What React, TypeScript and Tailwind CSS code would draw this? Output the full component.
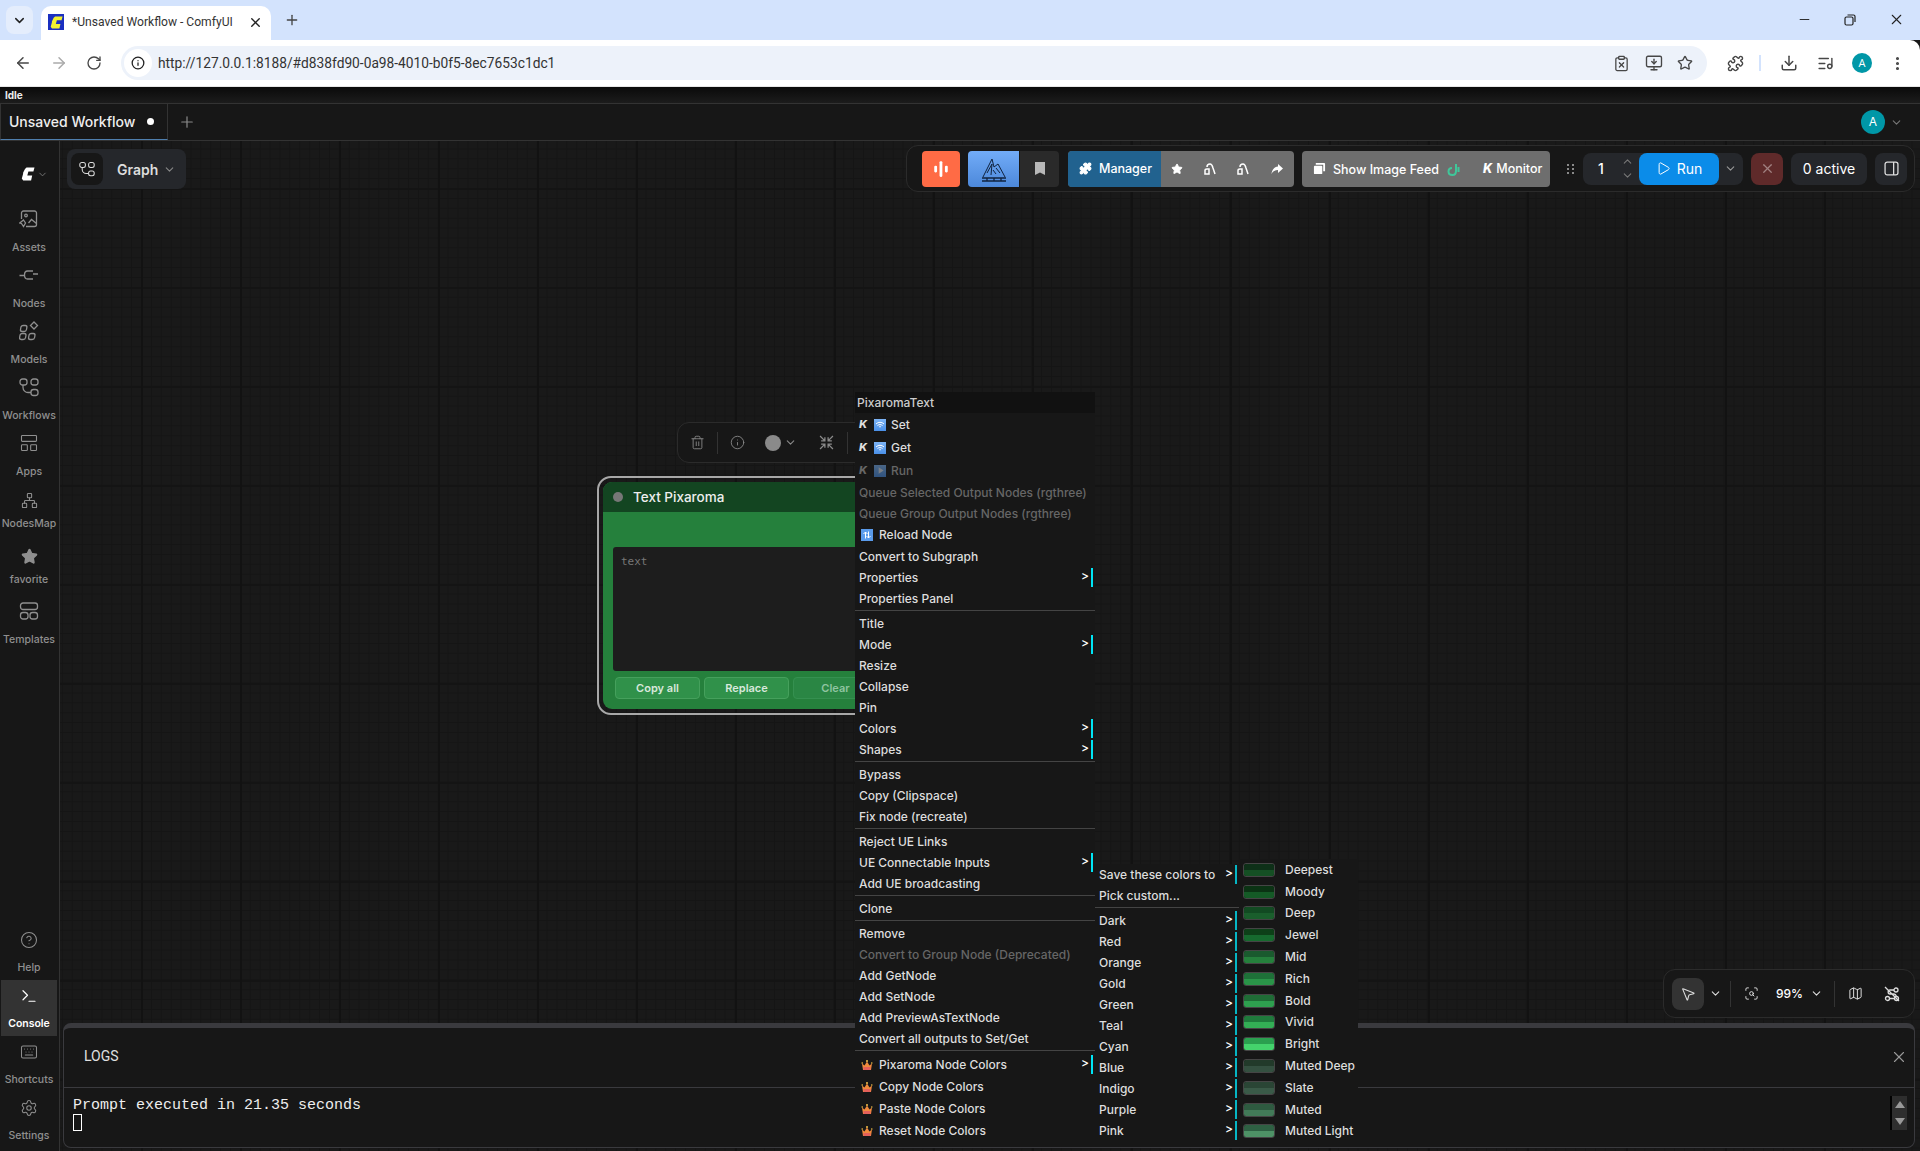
import type { ReactNode } from "react";
import {
  ArrowLeft,
  ArrowRight,
  ChevronDown,
  ChevronUp,
  CircleHelp,
  ClipboardX,
  Download,
  EllipsisVertical,
  Info,
  Keyboard,
  LayoutPanelTop,
  ListMusic,
  Map as MapIcon,
  Minus,
  MonitorDown,
  MousePointer2,
  Network,
  Play,
  Plus,
  Puzzle,
  RotateCw,
  ScanSearch,
  Settings,
  Star,
  Terminal,
  Trash2,
  X,
} from "lucide-react";

function ComfyLogo({ className, fill = "#fff" }: { className?: string; fill?: string }) {
  return (
    <svg viewBox="0 0 16 16" className={className}>
      <path d="M6.5 1.5H14.5L13.4 5.5H8.4L7.3 9.5H12.2L11.1 14.5H3.2L1.8 12.6L3 8.2L3.2 6.6L5 3Z" fill={fill} />
    </svg>
  );
}

function AssetsIcon() {
  return (
    <svg viewBox="0 0 20 20" className="h-[20px] w-[20px]" fill="none" stroke="currentColor" strokeWidth="1.3">
      <path d="M7 17.5H15.5C16.6 17.5 17.5 16.6 17.5 15.5V4C17.5 2.9 16.6 2 15.5 2H4.500C3.400 2 2.500 2.900 2.500 4V10" />
      <path d="M9.500 14L12.500 10.500L17.500 14.500" />
      <circle cx="7" cy="6.500" r="1.300" />
      <path d="M4.500 11L6.500 14L4.500 17.500L2.500 14.500L0.800 14Z" />
    </svg>
  );
}

function NodesIcon() {
  return (
    <svg viewBox="0 0 20 20" className="h-[20px] w-[20px]" fill="none" stroke="currentColor" strokeWidth="1.3">
      <path d="M0.500 10.500H5M14 9H19" />
      <path d="M14 6H8.500C6.500 6 5.500 8 5.500 10C5.500 12 6.500 14 8.500 14H14" />
    </svg>
  );
}

function ModelsIcon() {
  return (
    <svg viewBox="0 0 20 20" className="h-[20px] w-[20px]" fill="none" stroke="currentColor" strokeWidth="1.3">
      <rect x="3" y="4.500" width="6" height="6" rx="2" transform="skewX(-10)" />
      <rect x="3.500" y="12.500" width="6" height="6" rx="2" transform="skewX(-10)" />
      <rect x="12.500" y="12.500" width="6" height="6" rx="2" transform="skewX(-10)" />
      <path d="M15 1L18.500 4.500L15 8L11.500 4.500Z" />
    </svg>
  );
}

function WorkflowIcon({ className }: { className?: string }) {
  return (
    <svg viewBox="0 0 20 20" className={className} fill="none" stroke="currentColor" strokeWidth="1.3">
      <rect x="1" y="2" width="7" height="6" rx="2.500" />
      <rect x="12" y="2" width="7" height="6" rx="2.500" />
      <rect x="12" y="12.500" width="7" height="6" rx="2.500" />
      <path d="M4 8V10.500C4 13.500 6.500 15.500 9 15.500H12" />
    </svg>
  );
}

function TemplatesIcon() {
  return (
    <svg viewBox="0 0 20 20" className="h-[20px] w-[20px]" fill="none" stroke="currentColor" strokeWidth="1.3">
      <rect x="1.500" y="2" width="17" height="6.500" rx="2.500" />
      <rect x="1.500" y="11.500" width="7.500" height="6.500" rx="2.500" />
      <rect x="11" y="11.500" width="7.500" height="6.500" rx="2.500" />
    </svg>
  );
}

function SideItem({ icon, label, tight, active }: { icon: ReactNode; label: string; tight?: boolean; active?: boolean }) {
  return (
    <div
      className={
        "mx-[1px] flex h-[56px] w-[56px] flex-col items-center justify-center " +
        (tight ? "gap-[8px] " : "gap-[12px] ") +
        (active ? "bg-[#333333] text-white" : "text-[#8f8f8f]")
      }
    >
      {icon}
      <span className={"whitespace-nowrap text-[10.500px] leading-[13px] " + (active ? "font-semibold" : "font-medium")}>{label}</span>
    </div>
  );
}

function Sidebar() {
  return (
    <aside className="flex h-full w-[60px] shrink-0 flex-col border-r border-[#333333] bg-[#171717]">
      <div className="flex h-[62px] items-center pl-[20px] pt-[4px]">
        <ComfyLogo className="h-[16px] w-[16px]" />
        <ChevronDown className="ml-[1px] h-[11px] w-[11px] text-[#777777]" />
      </div>
      <SideItem icon={<AssetsIcon />} label="Assets" />
      <SideItem icon={<NodesIcon />} label="Nodes" />
      <SideItem icon={<ModelsIcon />} label="Models" />
      <SideItem icon={<WorkflowIcon className="h-[20px] w-[20px]" />} label="Workflows" />
      <SideItem icon={<LayoutPanelTop className="h-[20px] w-[20px]" strokeWidth={1.3} />} label="Apps" />
      <SideItem tight icon={<Network className="h-[17px] w-[17px]" strokeWidth={1.5} />} label="NodesMap" />
      <SideItem tight icon={<Star className="h-[17px] w-[17px]" fill="currentColor" />} label="favorite" />
      <SideItem icon={<TemplatesIcon />} label="Templates" />
      <div className="mt-auto pb-[3px]">
        <SideItem icon={<CircleHelp className="h-[18px] w-[18px]" strokeWidth={1.4} />} label="Help" />
        <SideItem active icon={<Terminal className="h-[18px] w-[18px]" strokeWidth={1.6} />} label="Console" />
        <SideItem icon={<Keyboard className="h-[18px] w-[18px]" strokeWidth={1.4} />} label="Shortcuts" />
        <SideItem icon={<Settings className="h-[18px] w-[18px]" strokeWidth={1.4} />} label="Settings" />
      </div>
    </aside>
  );
}

function ChromeBars() {
  return (
    <>
      <div className="flex h-[40px] items-start bg-[#d3e3fd] text-[#333333]">
        <div className="ml-[6px] mt-[6px] flex h-[28px] w-[27px] items-center justify-center rounded-[8px] bg-[#e4edfc]">
          <ChevronDown className="h-[15px] w-[15px] text-[#222222]" strokeWidth={2.4} />
        </div>
        <div className="ml-[8px] mt-[6px] flex h-[34px] w-[230px] items-center rounded-t-[10px] bg-white pb-[2px] pl-[7px]">
          <div className="flex h-[16px] w-[16px] items-center justify-center bg-[#1a2fc0]">
            <ComfyLogo className="h-[15px] w-[15px]" fill="#f2f230" />
          </div>
          <span className="ml-[8px] w-[176px] whitespace-nowrap text-[12.100px] text-[#333333] [font-family:Roboto,sans-serif]">*Unsaved Workflow - ComfyUI</span>
          <X className="h-[15px] w-[15px] text-[#222222]" strokeWidth={2.2} />
        </div>
        <Plus className="ml-[13px] mt-[12px] h-[16px] w-[16px] text-[#444444]" strokeWidth={2} />
        <Minus className="ml-auto mt-[12px] h-[15px] w-[15px] text-[#222222]" strokeWidth={1.5} />
        <svg viewBox="0 0 12 12" className="ml-[32px] mt-[14px] h-[12px] w-[12px]" fill="none" stroke="#222222" strokeWidth="1.200">
          <rect x="1" y="3" width="8" height="8" rx="1.500" />
          <path d="M3.500 1H9.500C10.500 1 11 1.500 11 2.500V8" />
        </svg>
        <X className="ml-[32px] mr-[15px] mt-[11px] h-[17px] w-[17px] text-[#222222]" strokeWidth={1.5} />
      </div>
      <div className="flex h-[46px] items-center rounded-tr-[10px] bg-white text-[#474747]">
        <ArrowLeft className="ml-[14px] h-[18px] w-[18px]" strokeWidth={2} />
        <ArrowRight className="ml-[18px] h-[18px] w-[18px] text-[#aaaaaa]" strokeWidth={2} />
        <RotateCw className="ml-[18px] h-[16px] w-[16px]" strokeWidth={2} />
        <div className="ml-[19px] flex h-[34px] w-[1586px] items-center rounded-full bg-[#edf2fa]">
          <div className="ml-[3px] flex h-[28px] w-[28px] items-center justify-center rounded-full bg-white">
            <Info className="h-[14px] w-[14px] text-[#222222]" strokeWidth={2.2} />
          </div>
          <span className="ml-[6px] pt-[1px] text-[13.760px] text-[#333333] [font-family:Roboto,sans-serif]">http://127.0.0.1:8188/#d838fd90-0a98-4010-b0f5-8ec7653c1dc1</span>
          <ClipboardX className="ml-auto h-[17px] w-[17px]" strokeWidth={1.8} />
          <MonitorDown className="ml-[15px] h-[18px] w-[18px]" strokeWidth={1.8} />
          <Star className="ml-[14px] mr-[14px] h-[16px] w-[16px]" strokeWidth={2} />
        </div>
        <Puzzle className="ml-[20px] h-[17px] w-[17px]" strokeWidth={2} />
        <div className="ml-[15px] h-[16px] w-[2px] bg-[#d3e3fd]" />
        <Download className="ml-[19px] h-[18px] w-[18px]" strokeWidth={2} />
        <ListMusic className="ml-[19px] h-[17px] w-[17px]" strokeWidth={2} />
        <div className="ml-[18px] flex h-[20px] w-[20px] items-center justify-center rounded-full bg-[#0097a7] text-[11px] text-white [font-family:'Open_Sans',sans-serif]">A</div>
        <EllipsisVertical className="ml-[17px] h-[17px] w-[17px]" strokeWidth={2.4} />
      </div>
      <div className="h-[1px] bg-[#e6e6e6]" />
    </>
  );
}

function TabBar() {
  return (
    <>
      <div className="flex h-[16px] items-center bg-[linear-gradient(#0a0a0a,#1c1c1c)] pl-[5px] text-[10px] font-bold text-[#eeeeee]">Idle</div>
      <div className="flex h-[38px] items-center border-y border-[#333333] bg-[#171717]">
        <div className="flex h-[36px] w-[168px] items-center border-x border-b border-[#333333] border-b-[#4f7fae] pl-[8px]">
          <span className="text-[14px] font-medium text-[#eeeeee]">Unsaved Workflow</span>
          <span className="ml-[12px] h-[7px] w-[7px] rounded-full bg-white" />
        </div>
        <Plus className="ml-[10px] h-[18px] w-[18px] text-[#8a8a8a]" strokeWidth={1.6} />
        <div className="ml-auto flex h-[24px] w-[24px] items-center justify-center rounded-full bg-[#0097a7] text-[12px] text-white">A</div>
        <ChevronDown className="ml-[5px] mr-[17px] h-[13px] w-[13px] text-[#777777]" />
      </div>
    </>
  );
}

function Toolbar() {
  return (
    <div className="absolute right-[5px] top-[4px] flex h-[47px] w-[1009px] items-center rounded-[12px] border border-[#2b2b2b] bg-[#171717] pl-[15px]">
      <div className="flex h-[36px] w-[38px] items-center justify-center rounded-[4px] bg-[#ff6b45]">
        <svg viewBox="0 0 16 16" className="h-[18px] w-[18px]" fill="#fff">
          <rect x="2" y="5" width="2.500" height="6" rx="1" />
          <rect x="6.700" y="1" width="2.500" height="14" rx="1" />
          <rect x="11.500" y="5" width="2.500" height="6" rx="1" />
        </svg>
      </div>
      <div className="ml-[8px] flex h-[36px] w-[51px] items-center justify-center rounded-l-[4px] bg-[linear-gradient(#72acf8,#4c88da)]">
        <svg viewBox="0 0 26 26" className="h-[26px] w-[26px]" fill="none" stroke="#10233f" strokeWidth="1">
          <path d="M2 21L11 3L13 11L17 8L24 21" />
          <path d="M6 17L11 8L10 19M12 14L15 18M15 12L19 17" />
          <path d="M1 22H25M1 25H25M6 22V25M13 22V25M20 22V25" strokeWidth="1.300" />
        </svg>
      </div>
      <div className="ml-[1px] flex h-[36px] w-[39px] items-center justify-center rounded-r-[4px] bg-[#2a2a2a]">
        <svg viewBox="0 0 12 14" className="h-[14px] w-[12px]" fill="#b8b8b8">
          <path d="M1 0H11V13L6 10.500L1 13Z" />
        </svg>
      </div>
      <div className="ml-[9px] flex h-[36px] w-[226px] overflow-hidden rounded-[4px] bg-[#6e6e6e] text-white">
        <div className="flex w-[93px] items-center bg-[#21628f] pl-[11px]">
          <Puzzle className="h-[13px] w-[13px]" fill="#fff" />
          <span className="ml-[7px] mt-[1px] text-[12.500px] font-medium">Manager</span>
        </div>
        <Star className="ml-[10px] mt-[12px] h-[12px] w-[12px]" fill="#fff" />
        <svg viewBox="0 0 12 12" className="ml-[21px] mt-[12px] h-[12px] w-[12px]" fill="none" stroke="#fff" strokeWidth="1.500">
          <path d="M1 11V7.500C1 6.500 2 6 3 6H5V11ZM3 4C3 2 4 1 6 1C8 1 8.500 3 9 5L11 11" />
        </svg>
        <svg viewBox="0 0 12 12" className="ml-[21px] mt-[12px] h-[12px] w-[12px]" fill="none" stroke="#fff" strokeWidth="1.500">
          <path d="M1 11V7.500C1 6.500 2 6 3 6H5V11ZM3 4C3 2 4 1 6 1C8 1 8.500 3 9 5L11 11" />
        </svg>
        <svg viewBox="0 0 12 12" className="ml-[22px] mt-[12px] h-[12px] w-[12px]" fill="#fff">
          <path d="M7 1L12 5.500L7 10V7C4 7 2 8 0.500 11C1 7 3 4 7 3.500Z" />
        </svg>
      </div>
      <div className="ml-[8px] flex h-[36px] w-[248px] items-center whitespace-nowrap rounded-[4px] bg-[#6e6e6e] pl-[11px] text-white">
        <svg viewBox="0 0 14 14" className="h-[13px] w-[13px]" fill="#fff">
          <path d="M3 1H12C12.600 1 13 1.400 13 2V10H11V3H3Z" />
          <rect x="1" y="4" width="9" height="9" rx="1" />
        </svg>
        <span className="ml-[7px] mt-[3px] text-[12.500px] font-medium">Show Image Feed</span>
        <svg viewBox="0 0 14 14" className="ml-[7px] mt-[2px] h-[14px] w-[14px]" fill="none" stroke="#3fc79a" strokeWidth="2">
          <path d="M10 1V8C10 10.500 8.500 12 6.500 12C4 12 2.500 10.500 2.500 8.500C2.500 6.500 4 5 6 5" />
          <path d="M12.500 4V9" />
        </svg>
        <span className="ml-[23px] mt-[1px] text-[12.500px] font-extrabold italic">K</span>
        <span className="ml-[4px] mt-[1px] text-[12.500px] font-medium">Monitor</span>
      </div>
      <div className="ml-[17px] grid grid-cols-2 gap-x-[3px] gap-y-[2px]">
        {[0, 1, 2, 3, 4, 5].map((i) => (
          <span key={i} className="h-[2px] w-[2px] bg-[#8a8a8a]" />
        ))}
      </div>
      <div className="ml-[9px] flex h-[32px] w-[160px] items-center rounded-[8px] bg-[#25272b]">
        <span className="ml-[15px] w-[23px] text-[14px] font-medium text-white">1</span>
        <div className="flex flex-col text-[#777777]">
          <ChevronUp className="h-[13px] w-[13px]" />
          <ChevronDown className="mt-[1px] h-[13px] w-[13px]" />
        </div>
        <div className="ml-[5px] flex h-[32px] w-[80px] items-center justify-center gap-[6px] rounded-[8px] bg-[#0b8ce9] text-white">
          <Play className="h-[15px] w-[15px]" strokeWidth={1.6} />
          <span className="text-[14px]">Run</span>
        </div>
        <ChevronDown className="ml-[5px] h-[13px] w-[13px] text-[#999999]" />
      </div>
      <div className="ml-[8px] flex h-[32px] w-[32px] items-center justify-center rounded-[8px] bg-[#5f2a2a]">
        <X className="h-[15px] w-[15px] text-[#a08080]" />
      </div>
      <div className="ml-[8px] flex h-[32px] w-[76px] items-center justify-center rounded-[8px] bg-[#25272b] text-[14px] text-white">0 active</div>
      <div className="ml-[8px] flex h-[32px] w-[32px] items-center justify-center rounded-[8px] bg-[#25272b]">
        <svg viewBox="0 0 14 14" className="h-[15px] w-[15px]" fill="none" stroke="#ddd" strokeWidth="1.200">
          <rect x="1" y="1" width="12" height="12" rx="2" />
          <path d="M9 1V13" />
        </svg>
      </div>
    </div>
  );
}

function NodeToolbox() {
  return (
    <div className="absolute left-[617px] top-[281px] flex h-[41px] w-[260px] items-center rounded-[12px] border border-[#2b2b2b] bg-[#171717] pl-[12px] text-[#8a8a8a]">
      <Trash2 className="h-[15px] w-[15px]" strokeWidth={1.4} />
      <div className="ml-[12px] h-[22px] w-[1px] bg-[#333333]" />
      <Info className="ml-[12px] h-[15px] w-[15px]" strokeWidth={1.4} />
      <span className="ml-[20px] h-[16px] w-[16px] rounded-full bg-[#8a8a8a]" />
      <ChevronDown className="ml-[3px] h-[13px] w-[13px]" />
      <svg viewBox="0 0 14 14" className="ml-[22px] h-[15px] w-[15px]" fill="none" stroke="currentColor" strokeWidth="1.200">
        <path d="M1 1L5.500 5.500M5.500 2V5.500H2M13 1L8.500 5.500M8.500 2V5.500H12M1 13L5.500 8.500M5.500 12V8.500H2M13 13L8.500 8.500M8.500 12V8.500H12" />
      </svg>
      <div className="ml-[13px] h-[22px] w-[1px] bg-[#333333]" />
    </div>
  );
}

function NodeCard() {
  return (
    <div className="absolute left-[537px] top-[335px] h-[239px] w-[330px] rounded-[14px] border-2 border-[#a8a8a8] p-[4px]">
      <div className="h-full overflow-hidden rounded-[9px] bg-[#25803c]">
        <div className="flex h-[30px] items-center bg-[#134521] pl-[10px]">
          <span className="h-[10px] w-[10px] rounded-full bg-[#777777]" />
          <span className="ml-[10px] text-[13.500px] font-medium text-[#eeeeee]">Text Pixaroma</span>
        </div>
        <div className="ml-[10px] mt-[35px] h-[124px] w-[300px] rounded-[3px] bg-[#1d1d1d] pl-[8px] pt-[7px] text-[11px] text-[#777777] [font-family:'DejaVu_Sans_Mono',monospace]">text</div>
        <div className="ml-[12px] mt-[6px] flex gap-[4px] text-[11px] font-semibold">
          <div className="flex h-[22px] w-[85px] items-center justify-center rounded-[4px] border border-[#45a05c] bg-[#30914a] text-[#d8e8dc]">Copy all</div>
          <div className="flex h-[22px] w-[85px] items-center justify-center rounded-[4px] border border-[#45a05c] bg-[#30914a] text-[#d8e8dc]">Replace</div>
          <div className="flex h-[22px] w-[85px] items-center justify-center rounded-[4px] border border-[#359050] bg-[#2a8644] text-[#8fc4a0]">Clear</div>
        </div>
      </div>
    </div>
  );
}

function WifiBadge({ dim }: { dim?: boolean }) {
  return (
    <span className={"flex h-[12px] w-[12px] items-center justify-center bg-[linear-gradient(#7db4f5,#4a90e8)] " + (dim ? "opacity-50" : "")}>
      {dim ? (
        <svg viewBox="0 0 10 10" className="h-[9px] w-[9px]" fill="#d8e4f5"><path d="M3 1.500L8.500 5L3 8.500Z" /></svg>
      ) : (
        <svg viewBox="0 0 10 10" className="h-[10px] w-[10px]" fill="none" stroke="#fff" strokeWidth="1">
          <path d="M1 4C3.500 1.800 6.500 1.800 9 4M2.500 5.500C4 4.300 6 4.300 7.500 5.500M4 7C4.600 6.500 5.400 6.500 6 7" />
        </svg>
      )}
    </span>
  );
}

function Crown() {
  return (
    <svg viewBox="0 0 12 12" className="h-[12px] w-[12px]">
      <path d="M1 4.500L3.500 6.500L6 2.500L8.500 6.500L11 4.500L10 11H2Z" fill="#f08a3c" />
      <rect x="2.500" y="8" width="7" height="3" fill="#e4605a" />
      <circle cx="6" cy="2" r="1" fill="#f4c24a" />
      <circle cx="1.200" cy="4" r="0.800" fill="#f4c24a" />
      <circle cx="10.800" cy="4" r="0.800" fill="#f4c24a" />
    </svg>
  );
}

function Sep() {
  return (
    <div className="flex h-[4px] items-start pt-[1px]">
      <div className="h-[1px] w-full bg-[#444444]" />
    </div>
  );
}

function Row({ label, dim, sub, bar = "bg-[#00e5f5]" }: { label: string; dim?: boolean; sub?: boolean; bar?: string }) {
  return (
    <div className={"relative flex h-[21px] items-center whitespace-nowrap pl-[4px] " + (dim ? "text-[#666666]" : "text-[#dddddd]")}>
      {label}
      {sub && (
        <>
          <span className="absolute right-[6px] top-[0px] text-[12px] text-white">&gt;</span>
          <span className={"absolute right-[2px] top-[1px] h-[19px] w-[2px] " + bar} />
        </>
      )}
    </div>
  );
}

function KRow({ label, dim }: { label: string; dim?: boolean }) {
  return (
    <div className={"flex h-[23px] items-center pl-[4px] " + (dim ? "text-[#666666]" : "text-[#dddddd]")}>
      <span className="w-[11px] text-[11px] font-extrabold italic">K</span>
      <span className="ml-[4px]"><WifiBadge dim={dim} /></span>
      <span className="ml-[5px]">{label}</span>
    </div>
  );
}

function CrownRow({ label, sub }: { label: string; sub?: boolean }) {
  return (
    <div className="relative flex h-[22px] items-center pl-[6px] text-[#dddddd]">
      <Crown />
      <span className="ml-[6px]">{label}</span>
      {sub && (
        <>
          <span className="absolute right-[6px] top-[0px] text-[12px] text-white">&gt;</span>
          <span className="absolute right-[2px] top-[1px] h-[19px] w-[2px] bg-[#00e5f5]" />
        </>
      )}
    </div>
  );
}

function MainMenu() {
  return (
    <div className="absolute left-[795px] top-[251px] w-[240px] bg-[#171717] text-[12px] font-medium">
      <div className="flex h-[21px] items-center bg-[#111111] pl-[2px] text-[#cccccc]">PixaromaText</div>
      <KRow label="Set" />
      <KRow label="Get" />
      <KRow label="Run" dim />
      <Row label="Queue Selected Output Nodes (rgthree)" dim />
      <Row label="Queue Group Output Nodes (rgthree)" dim />
      <div className="flex h-[22px] items-center pl-[6px] text-[#dddddd]">
        <span className="flex h-[12px] w-[12px] items-center justify-center bg-[#5a9bec]">
          <svg viewBox="0 0 10 10" className="h-[10px] w-[10px]" fill="none" stroke="#fff" strokeWidth="1">
            <path d="M3.500 8.500V2M1.500 4L3.500 2L5.500 4M6.500 1.500V8M4.500 6L6.500 8L8.500 6" />
          </svg>
        </span>
        <span className="ml-[6px]">Reload Node</span>
      </div>
      <Row label="Convert to Subgraph" />
      <Row label="Properties" sub />
      <Row label="Properties Panel" />
      <Sep />
      <Row label="Title" />
      <Row label="Mode" sub />
      <Row label="Resize" />
      <Row label="Collapse" />
      <Row label="Pin" />
      <Row label="Colors" sub />
      <Row label="Shapes" sub />
      <Sep />
      <Row label="Bypass" />
      <Row label="Copy (Clipspace)" />
      <Row label="Fix node (recreate)" />
      <Sep />
      <Row label="Reject UE Links" />
      <Row label="UE Connectable Inputs" sub />
      <Row label="Add UE broadcasting" />
      <Sep />
      <Row label="Clone" />
      <Sep />
      <Row label="Remove" />
      <Row label="Convert to Group Node (Deprecated)" dim />
      <Row label="Add GetNode" />
      <Row label="Add SetNode" />
      <Row label="Add PreviewAsTextNode" />
      <Row label="Convert all outputs to Set/Get" />
      <div className="h-[5px] pt-[1px]">
        <div className="h-[1px] w-full bg-[#444444]" />
      </div>
      <CrownRow label="Pixaroma Node Colors" sub />
      <CrownRow label="Copy Node Colors" />
      <CrownRow label="Paste Node Colors" />
      <CrownRow label="Reset Node Colors" />
    </div>
  );
}

const families = ["Dark", "Red", "Orange", "Gold", "Green", "Teal", "Cyan", "Blue", "Indigo", "Purple", "Pink"];

function ColorsMenu() {
  return (
    <div className="absolute left-[1035px] top-[723px] w-[144px] bg-[#171717] pb-[1px] text-[12px] font-medium">
      <Row label="Save these colors to" sub bar="bg-[#06b6c4]" />
      <Row label="Pick custom..." />
      <Sep />
      {families.map((f) => (
        <Row key={f} label={f} sub bar="bg-[#06b6c4]" />
      ))}
    </div>
  );
}

const shades = [
  { name: "Deepest", top: "#0e3018", bottom: "#155024" },
  { name: "Moody", top: "#0b3314", bottom: "#145a26" },
  { name: "Deep", top: "#124a22", bottom: "#1a5e2c" },
  { name: "Jewel", top: "#0d4018", bottom: "#166a2e" },
  { name: "Mid", top: "#1a5a2e", bottom: "#25803c" },
  { name: "Rich", top: "#1e7038", bottom: "#2a9448" },
  { name: "Bold", top: "#1f6c36", bottom: "#2ea04f" },
  { name: "Vivid", top: "#1f7a3c", bottom: "#33ae55" },
  { name: "Bright", top: "#2aa04f", bottom: "#44d36c" },
  { name: "Muted Deep", top: "#223a2a", bottom: "#345040" },
  { name: "Slate", top: "#2a4535", bottom: "#3a5a48" },
  { name: "Muted", top: "#2e5a40", bottom: "#427a58" },
  { name: "Muted Light", top: "#2e6043", bottom: "#4e9266" },
];

function ShadesMenu() {
  return (
    <div className="absolute left-[1179px] top-[718px] w-[119px] bg-[#171717] text-[12px] font-medium text-[#dddddd]">
      {shades.map((s) => (
        <div key={s.name} className="flex h-[21.800px] items-center pl-[4px]">
          <div className="h-[14px] w-[32px] overflow-hidden rounded-[3px] border border-[#ffffff33]">
            <div className="h-1/2" style={{ background: s.top }} />
            <div className="h-1/2" style={{ background: s.bottom }} />
          </div>
          <span className="ml-[10px] whitespace-nowrap">{s.name}</span>
        </div>
      ))}
    </div>
  );
}

function ZoomBox() {
  return (
    <div className="absolute right-[5px] top-[828px] flex h-[49px] w-[252px] items-center rounded-[12px] border border-[#2b2b2b] bg-[#171717] pl-[8px] text-[#dddddd]">
      <div className="flex h-[32px] w-[32px] items-center justify-center rounded-[8px] bg-[#333333]">
        <MousePointer2 className="h-[16px] w-[16px]" strokeWidth={1.6} />
      </div>
      <ChevronDown className="ml-[5px] h-[13px] w-[13px]" />
      <div className="ml-[8px] h-[26px] w-[1px] bg-[#333333]" />
      <ScanSearch className="ml-[13px] h-[15px] w-[15px]" strokeWidth={1.6} />
      <span className="ml-[17px] text-[12px] font-medium text-white">99%</span>
      <ChevronDown className="ml-[7px] h-[13px] w-[13px]" />
      <div className="ml-[11px] h-[26px] w-[1px] bg-[#333333]" />
      <MapIcon className="ml-[13px] h-[15px] w-[15px]" strokeWidth={1.6} />
      <svg viewBox="0 0 16 16" className="ml-[21px] h-[16px] w-[16px]" fill="none" stroke="currentColor" strokeWidth="1.300">
        <circle cx="3.500" cy="12.500" r="2" />
        <circle cx="12.500" cy="12.500" r="2" />
        <circle cx="12" cy="4" r="2" />
        <path d="M1 1L15 15M5.500 12.500H10.500M10 4H6C3.500 4 3.500 8 6 8H10C11 8 12 9 12.500 10.500" />
      </svg>
    </div>
  );
}

function ConsolePanel() {
  return (
    <div className="absolute bottom-[3px] left-[3px] right-[5px] top-[882px] overflow-hidden rounded-[8px] border border-t-[5px] border-[#3a3a3e] bg-[#171717]">
      <div className="flex h-[60px] items-center justify-between border-b border-[#3a3a3e] pb-[2px] pl-[20px] pr-[6px]">
        <span className="text-[14px] text-[#e0e0e0] [font-family:Roboto,sans-serif]">LOGS</span>
        <X className="h-[18px] w-[18px] text-[#9a9a9a]" strokeWidth={1.5} />
      </div>
      <div className="flex items-start justify-between pl-[9px] pr-[7px] pt-[8px]">
        <div className="pt-[1px] text-[15px] leading-[17px] text-[#eeeeee] [font-family:'Liberation_Mono',monospace]">
          <div>Prompt executed in 21.35 seconds</div>
          <div className="h-[17px] w-[9px] border border-white" />
        </div>
        <div className="flex h-[34px] w-[17px] flex-col items-center justify-between border-l-2 border-black bg-[#2e2e2e] py-[5px]">
          <div className="h-0 w-0 border-x-[5px] border-b-[7px] border-x-transparent border-b-[#999999]" />
          <div className="h-0 w-0 border-x-[5px] border-t-[7px] border-x-transparent border-t-[#999999]" />
        </div>
      </div>
    </div>
  );
}

export default function App() {
  return (
    <div className="flex h-[1151px] w-[1920px] flex-col overflow-hidden bg-[#171717] [font-family:Inter,sans-serif]">
      <ChromeBars />
      <TabBar />
      <div className="flex min-h-0 flex-1">
        <Sidebar />
        <main className="relative flex-1 bg-[#191919] bg-[linear-gradient(90deg,#121212_2px,transparent_2px),linear-gradient(#141414_2px,transparent_2px),linear-gradient(90deg,#151515_1px,transparent_1px),linear-gradient(#151515_1px,transparent_1px)] bg-[size:99px_99px,99px_99px,9.900px_9.900px,9.900px_9.900px] bg-[position:81px_47px,81px_47px,81px_47px,81px_47px]">
          <div className="absolute left-[7px] top-[8px] flex h-[40px] w-[119px] items-center rounded-[8px] bg-[#25272b] pl-[4px]">
            <div className="flex h-[32px] w-[32px] items-center justify-center rounded-[8px] bg-[#171717] text-[#dddddd]">
              <WorkflowIcon className="h-[16px] w-[16px]" />
            </div>
            <span className="ml-[14px] text-[14px] font-semibold text-[#dddddd]">Graph</span>
            <ChevronDown className="ml-[5px] h-[13px] w-[13px] text-[#888888]" />
          </div>
          <Toolbar />
          <ZoomBox />
          <ConsolePanel />
          <NodeToolbox />
          <NodeCard />
          <MainMenu />
          <ColorsMenu />
          <ShadesMenu />
        </main>
      </div>
    </div>
  );
}
